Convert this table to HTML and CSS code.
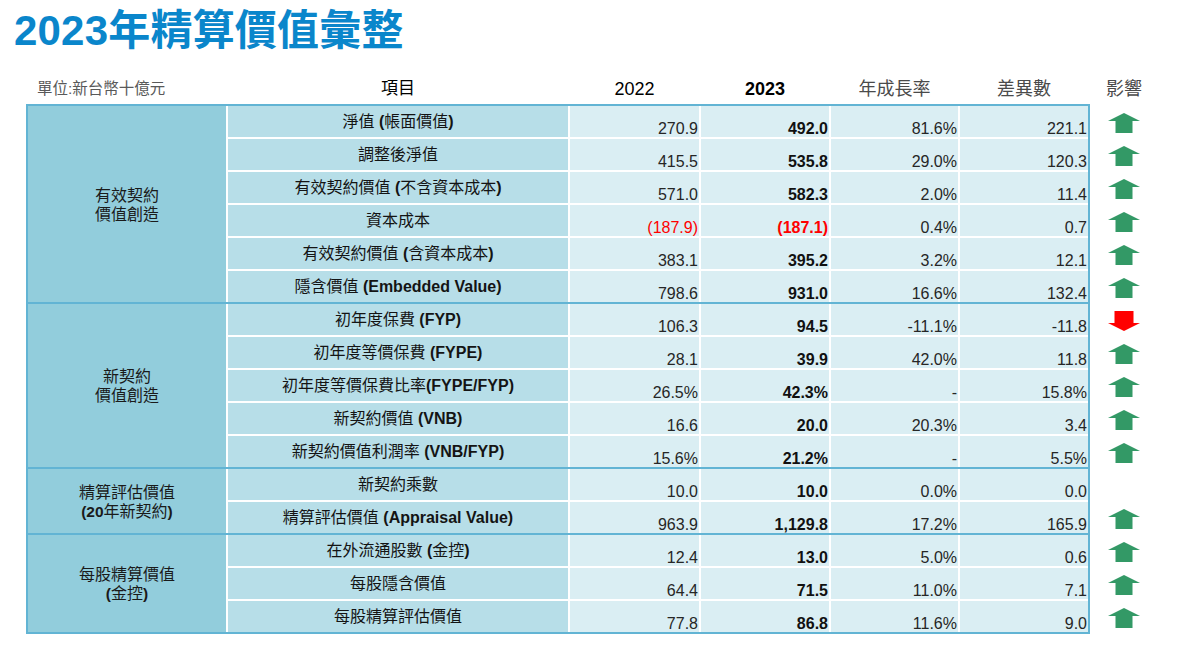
FILE: index.html
```html
<!DOCTYPE html>
<html lang="zh-Hant">
<head>
<meta charset="utf-8">
<title>2023年精算價值彙整</title>
<link rel="stylesheet" href="styles.css">
</head>
<body>
<h1 class="title">2023年精算價值彙整</h1>

<div class="head">
  <div class="unit">單位:新台幣十億元</div>
  <div class="hc hc-item">項目</div>
  <div class="hc">2022</div>
  <div class="hc hc-bold">2023</div>
  <div class="hc hc-gray">年成長率</div>
  <div class="hc hc-gray">差異數</div>
  <div class="hc hc-gray">影響</div>
</div>

<div class="sheet">
  <div class="table">
    <div class="group">
      <div class="glabel span6"><span>有效契約<br>價值創造</span></div>
      <div class="item"><span>淨值 <b>(</b>帳面價值<b>)</b></span></div>
      <div class="num">270.9</div><div class="num bold">492.0</div><div class="num">81.6%</div><div class="num">221.1</div>
      <div class="item"><span>調整後淨值</span></div>
      <div class="num">415.5</div><div class="num bold">535.8</div><div class="num">29.0%</div><div class="num">120.3</div>
      <div class="item"><span>有效契約價值 <b>(</b>不含資本成本<b>)</b></span></div>
      <div class="num">571.0</div><div class="num bold">582.3</div><div class="num">2.0%</div><div class="num">11.4</div>
      <div class="item"><span>資本成本</span></div>
      <div class="num neg">(187.9)</div><div class="num bold neg">(187.1)</div><div class="num">0.4%</div><div class="num">0.7</div>
      <div class="item"><span>有效契約價值 <b>(</b>含資本成本<b>)</b></span></div>
      <div class="num">383.1</div><div class="num bold">395.2</div><div class="num">3.2%</div><div class="num">12.1</div>
      <div class="item"><span>隱含價值 <b>(Embedded Value)</b></span></div>
      <div class="num">798.6</div><div class="num bold">931.0</div><div class="num">16.6%</div><div class="num">132.4</div>
    </div>
    <div class="group">
      <div class="glabel span5"><span>新契約<br>價值創造</span></div>
      <div class="item"><span>初年度保費 <b>(FYP)</b></span></div>
      <div class="num">106.3</div><div class="num bold">94.5</div><div class="num">-11.1%</div><div class="num">-11.8</div>
      <div class="item"><span>初年度等價保費 <b>(FYPE)</b></span></div>
      <div class="num">28.1</div><div class="num bold">39.9</div><div class="num">42.0%</div><div class="num">11.8</div>
      <div class="item"><span>初年度等價保費比率<b>(FYPE/FYP)</b></span></div>
      <div class="num">26.5%</div><div class="num bold">42.3%</div><div class="num">-</div><div class="num">15.8%</div>
      <div class="item"><span>新契約價值 <b>(VNB)</b></span></div>
      <div class="num">16.6</div><div class="num bold">20.0</div><div class="num">20.3%</div><div class="num">3.4</div>
      <div class="item"><span>新契約價值利潤率 <b>(VNB/FYP)</b></span></div>
      <div class="num">15.6%</div><div class="num bold">21.2%</div><div class="num">-</div><div class="num">5.5%</div>
    </div>
    <div class="group">
      <div class="glabel span2"><span>精算評估價值<br><b>(20</b>年新契約<b>)</b></span></div>
      <div class="item"><span>新契約乘數</span></div>
      <div class="num">10.0</div><div class="num bold">10.0</div><div class="num">0.0%</div><div class="num">0.0</div>
      <div class="item"><span>精算評估價值 <b>(Appraisal Value)</b></span></div>
      <div class="num">963.9</div><div class="num bold">1,129.8</div><div class="num">17.2%</div><div class="num">165.9</div>
    </div>
    <div class="group">
      <div class="glabel span3"><span>每股精算價值<br><b>(</b>金控<b>)</b></span></div>
      <div class="item"><span>在外流通股數 <b>(</b>金控<b>)</b></span></div>
      <div class="num">12.4</div><div class="num bold">13.0</div><div class="num">5.0%</div><div class="num">0.6</div>
      <div class="item"><span>每股隱含價值</span></div>
      <div class="num">64.4</div><div class="num bold">71.5</div><div class="num">11.0%</div><div class="num">7.1</div>
      <div class="item"><span>每股精算評估價值</span></div>
      <div class="num">77.8</div><div class="num bold">86.8</div><div class="num">11.6%</div><div class="num">9.0</div>
    </div>
  </div>

  <div class="impact">
    <div class="arw"><svg class="up" viewBox="0 0 32 20" width="32" height="20"><polygon points="0,8 16,0 32,8 24.5,8 24.5,20 7.5,20 7.5,8"/></svg></div>
    <div class="arw"><svg class="up" viewBox="0 0 32 20" width="32" height="20"><polygon points="0,8 16,0 32,8 24.5,8 24.5,20 7.5,20 7.5,8"/></svg></div>
    <div class="arw"><svg class="up" viewBox="0 0 32 20" width="32" height="20"><polygon points="0,8 16,0 32,8 24.5,8 24.5,20 7.5,20 7.5,8"/></svg></div>
    <div class="arw"><svg class="up" viewBox="0 0 32 20" width="32" height="20"><polygon points="0,8 16,0 32,8 24.5,8 24.5,20 7.5,20 7.5,8"/></svg></div>
    <div class="arw"><svg class="up" viewBox="0 0 32 20" width="32" height="20"><polygon points="0,8 16,0 32,8 24.5,8 24.5,20 7.5,20 7.5,8"/></svg></div>
    <div class="arw"><svg class="up" viewBox="0 0 32 20" width="32" height="20"><polygon points="0,8 16,0 32,8 24.5,8 24.5,20 7.5,20 7.5,8"/></svg></div>
    <div class="arw"><svg class="down" viewBox="0 0 32 20" width="32" height="20"><polygon points="6.5,0 25.5,0 25.5,12 32,12 16,20 0,12 6.5,12"/></svg></div>
    <div class="arw"><svg class="up" viewBox="0 0 32 20" width="32" height="20"><polygon points="0,8 16,0 32,8 24.5,8 24.5,20 7.5,20 7.5,8"/></svg></div>
    <div class="arw"><svg class="up" viewBox="0 0 32 20" width="32" height="20"><polygon points="0,8 16,0 32,8 24.5,8 24.5,20 7.5,20 7.5,8"/></svg></div>
    <div class="arw"><svg class="up" viewBox="0 0 32 20" width="32" height="20"><polygon points="0,8 16,0 32,8 24.5,8 24.5,20 7.5,20 7.5,8"/></svg></div>
    <div class="arw"><svg class="up" viewBox="0 0 32 20" width="32" height="20"><polygon points="0,8 16,0 32,8 24.5,8 24.5,20 7.5,20 7.5,8"/></svg></div>
    <div class="arw"></div>
    <div class="arw"><svg class="up" viewBox="0 0 32 20" width="32" height="20"><polygon points="0,8 16,0 32,8 24.5,8 24.5,20 7.5,20 7.5,8"/></svg></div>
    <div class="arw"><svg class="up" viewBox="0 0 32 20" width="32" height="20"><polygon points="0,8 16,0 32,8 24.5,8 24.5,20 7.5,20 7.5,8"/></svg></div>
    <div class="arw"><svg class="up" viewBox="0 0 32 20" width="32" height="20"><polygon points="0,8 16,0 32,8 24.5,8 24.5,20 7.5,20 7.5,8"/></svg></div>
    <div class="arw"><svg class="up" viewBox="0 0 32 20" width="32" height="20"><polygon points="0,8 16,0 32,8 24.5,8 24.5,20 7.5,20 7.5,8"/></svg></div>
  </div>
</div>
</body>
</html>
```
FILE: styles.css
```css
* { box-sizing: border-box; }

html, body {
  margin: 0;
  padding: 0;
  background: #ffffff;
}

body {
  font-family: "Liberation Sans", "Noto Sans CJK TC", sans-serif;
  color: #222222;
}

.title {
  margin: 10px 0 0 14px;
  font-size: 42px;
  line-height: 42px;
  font-weight: bold;
  color: #0a86cb;
  letter-spacing: 0.2px;
}

.head {
  display: grid;
  grid-template-columns: 198px 340px 129px 128px 127px 128px 68px;
  column-gap: 2px;
  margin: 24px 0 0 26px;
  padding-left: 2px;
  height: 26px;
  line-height: 26px;
}

.unit {
  padding-left: 9px;
  font-size: 15.5px;
  color: #595959;
}

.hc {
  text-align: center;
  font-size: 18px;
  color: #000000;
}

.hc-item { font-size: 17px; }
.hc-bold { font-weight: bold; }
.hc-gray { color: #4a4a4a; }

.sheet {
  display: flex;
  margin: 2px 0 0 26px;
}

.table {
  width: 1064px;
  border: 2px solid #62b4d4;
  display: flex;
  flex-direction: column;
}

.group {
  display: grid;
  grid-template-columns: 198px 340px 129px 128px 127px 128px;
  grid-auto-rows: 31px;
  gap: 2px;
  background: #ffffff;
}

.group + .group {
  border-top: 2px solid #62b4d4;
}

.glabel {
  grid-column: 1;
  background: #92cddc;
  display: flex;
  align-items: center;
  justify-content: center;
  text-align: center;
  font-size: 16px;
  line-height: 19px;
  color: #1a1a1a;
  padding-top: 1px;
}

.glabel b { font-size: 15.5px; }

.span6 { grid-row: span 6; }
.span5 { grid-row: span 5; }
.span3 { grid-row: span 3; }
.span2 { grid-row: span 2; }

.item {
  background: #b7dee8;
  display: flex;
  align-items: center;
  justify-content: center;
  font-size: 16px;
  line-height: 20px;
  color: #141414;
  white-space: pre;
}

.item b { font-size: 16px; font-weight: bold; }

.num {
  background: #daeef3;
  display: flex;
  align-items: flex-end;
  justify-content: flex-end;
  padding-right: 1px;
  font-size: 16px;
  line-height: 16px;
  color: #262626;
}

.bold { font-weight: bold; color: #111111; }
.neg { color: #ff0000; }

.impact {
  width: 68px;
  display: flex;
  flex-direction: column;
  gap: 2px;
  padding-top: 2px;
}

.arw {
  height: 31px;
  display: flex;
  justify-content: center;
  align-items: flex-start;
  padding-top: 7px;
}

.up { fill: #339966; display: block; }
.down { fill: #ff0000; display: block; }
```
